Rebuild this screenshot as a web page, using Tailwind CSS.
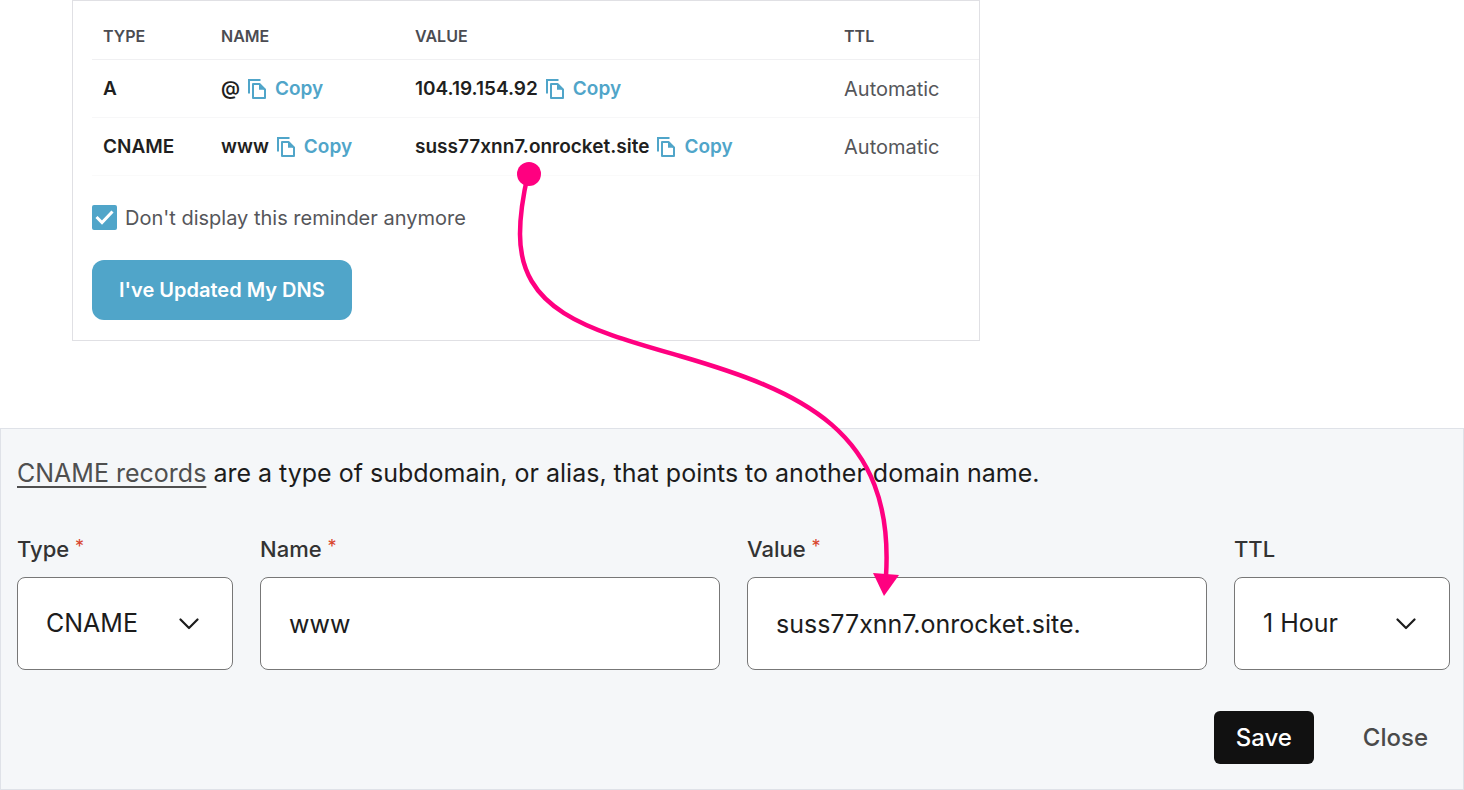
<!DOCTYPE html>
<html lang="en">
    <head>
        <meta charset="UTF-8">
        <meta name="viewport" content="width=device-width, initial-scale=1.0">
        <title>Update DNS records</title>
        <script src="https://cdn.jsdelivr.net/npm/@tailwindcss/browser@4"></script>
    </head>
    <body class="relative min-h-screen flex flex-col bg-white font-['Inter',sans-serif]">
        <svg class="hidden">
            <symbol id="copy" viewBox="0 0 18 20">
                <path d="M1 14.5V1H12.5" fill="none" stroke="currentColor" stroke-width="2"/>
                <path d="M5 5H11.5L17 10.5V19H5Z" fill="none" stroke="currentColor" stroke-width="2" stroke-linejoin="round"/>
                <path d="M11 5V10.8H17Z" fill="currentColor"/>
            </symbol>
            <symbol id="chevron" viewBox="0 0 20 12">
                <path d="M1.5 1.5L10 10L18.5 1.5" fill="none" stroke="currentColor" stroke-width="2.2" stroke-linecap="round" stroke-linejoin="round"/>
            </symbol>
        </svg>

        <!-- DNS reminder -->
        <section class="ml-[72px] max-w-[908px] border border-[#e0e0e4] pl-[19px] pb-5 text-xl text-[#55565a]">
            <table class="w-full table-fixed text-left">
                <colgroup>
                    <col class="w-[118px]">
                    <col class="w-[194px]">
                    <col class="w-[429px]">
                    <col>
                </colgroup>
                <thead>
                    <tr class="h-[58px] border-b border-[#f0f0f2] text-base text-[#4b4c52]">
                        <th class="pl-[11px] pt-3 font-semibold">TYPE</th>
                        <th class="pl-[11px] pt-3 font-semibold">NAME</th>
                        <th class="pl-[11px] pt-3 font-semibold">VALUE</th>
                        <th class="pl-[11px] pt-3 font-semibold">TTL</th>
                    </tr>
                </thead>
                <tbody>
                    <tr class="h-[58px] border-b border-[#f7f7f8]">
                        <td class="pl-[11px] pt-[2px] text-[19px] font-semibold text-[#1f1f21]">A</td>
                        <td class="pl-[11px] pt-[2px]">
                            <div class="flex items-center gap-2 text-[19px] font-semibold text-[#1f1f21]">@
                                <button class="flex items-center gap-[9px] text-[#50a5c9]"><svg class="w-[18px] h-5"><use href="#copy"/></svg>Copy</button>
                            </div>
                        </td>
                        <td class="pl-[11px] pt-[2px]">
                            <div class="flex items-center gap-2 text-[19px] font-semibold text-[#1f1f21]">104.19.154.92
                                <button class="flex items-center gap-[9px] text-[#50a5c9]"><svg class="w-[18px] h-5"><use href="#copy"/></svg>Copy</button>
                            </div>
                        </td>
                        <td class="pl-[11px] pt-[2px]">Automatic</td>
                    </tr>
                    <tr class="h-[58px] border-b border-[#fafafa]">
                        <td class="pl-[11px] pt-[2px] text-[19px] font-semibold text-[#1f1f21]">CNAME</td>
                        <td class="pl-[11px] pt-[2px]">
                            <div class="flex items-center gap-2 text-[19px] font-semibold text-[#1f1f21]">www
                                <button class="flex items-center gap-[9px] text-[#50a5c9]"><svg class="w-[18px] h-5"><use href="#copy"/></svg>Copy</button>
                            </div>
                        </td>
                        <td class="pl-[11px] pt-[2px]">
                            <div class="flex items-center gap-2 text-[19px] font-semibold text-[#1f1f21]">suss77xnn7.onrocket.site
                                <button class="flex items-center gap-[9px] text-[#50a5c9]"><svg class="w-[18px] h-5"><use href="#copy"/></svg>Copy</button>
                            </div>
                        </td>
                        <td class="pl-[11px] pt-[2px]">Automatic</td>
                    </tr>
                </tbody>
            </table>

            <label class="mt-7 flex w-fit items-center gap-2">
                <span class="grid">
                    <input type="checkbox" checked class="col-start-1 row-start-1 size-[25px] appearance-none rounded-xs bg-[#50a5c9]">
                    <svg viewBox="0 0 25 25" class="pointer-events-none col-start-1 row-start-1 size-[25px] text-white">
                        <path d="M4.5 12L10 17.5L20.5 6.5" fill="none" stroke="currentColor" stroke-width="3"/>
                    </svg>
                </span>
                Don't display this reminder anymore
            </label>

            <button class="mt-7 h-[60px] rounded-xl bg-[#50a5c9] px-[27px] font-semibold text-white">I've Updated My DNS</button>
        </section>

        <!-- Record form -->
        <form class="mt-[87px] flex-1 border border-[#dfe2e8] bg-[#f5f7f9] pt-6 pr-[13px] pb-6 pl-4 text-[25px] text-[#1c1c1c]">
            <p class="leading-10"><a href="#" class="text-[#4f4f4f] underline decoration-2 underline-offset-4">CNAME records</a> are a type of subdomain, or alias, that points to another domain name.</p>

            <div class="mt-9 grid grid-cols-[216px_1fr_1fr_216px] gap-[27px]">
                <div>
                    <label for="type" class="block text-[22px] leading-10 font-medium text-[#333]">Type <span class="align-top text-lg leading-9 font-normal text-[#d8432b]">*</span></label>
                    <div class="relative mt-2">
                        <select id="type" class="h-[93px] w-full appearance-none rounded-lg border border-[#777] bg-white px-7 pt-[2px]">
                            <option>CNAME</option>
                        </select>
                        <svg class="pointer-events-none absolute top-[41px] right-[34px] h-3 w-5"><use href="#chevron"/></svg>
                    </div>
                </div>
                <div>
                    <label for="name" class="block text-[22px] leading-10 font-medium text-[#333]">Name <span class="align-top text-lg leading-9 font-normal text-[#d8432b]">*</span></label>
                    <input id="name" type="text" value="www" class="mt-2 block h-[93px] w-full rounded-lg border border-[#777] bg-white px-7 pt-[2px]">
                </div>
                <div>
                    <label for="value" class="block text-[22px] leading-10 font-medium text-[#333]">Value <span class="align-top text-lg leading-9 font-normal text-[#d8432b]">*</span></label>
                    <input id="value" type="text" value="suss77xnn7.onrocket.site." class="mt-2 block h-[93px] w-full rounded-lg border border-[#777] bg-white px-7 pt-[2px]">
                </div>
                <div>
                    <label for="ttl" class="block text-[22px] leading-10 font-medium text-[#333]">TTL</label>
                    <div class="relative mt-2">
                        <select id="ttl" class="h-[93px] w-full appearance-none rounded-lg border border-[#777] bg-white px-7 pt-[2px]">
                            <option>1 Hour</option>
                        </select>
                        <svg class="pointer-events-none absolute top-[41px] right-[34px] h-3 w-5"><use href="#chevron"/></svg>
                    </div>
                </div>
            </div>

            <div class="mt-[41px] flex justify-end gap-[27px] text-2xl font-medium">
                <button type="button" class="h-[53px] rounded-md bg-[#111] px-[22px] pt-[2px] text-white">Save</button>
                <button type="button" class="h-[53px] px-[22px] pt-[2px] text-[#4a4a4a]">Close</button>
            </div>
        </form>

        <!-- Arrow from the record to the value field -->
        <svg class="pointer-events-none absolute top-0 left-0 text-[#ff0080]" width="920" height="600" viewBox="0 0 920 600">
            <circle cx="529" cy="174" r="12" fill="currentColor"/>
            <path d="M528 174C522 200 520 216 520 234C520 312 590 330 680 356C800 391 895 430 886 576" fill="none" stroke="currentColor" stroke-width="4.5"/>
            <path d="M873 573L899 575L884 596Z" fill="currentColor"/>
        </svg>
    </body>
</html>
